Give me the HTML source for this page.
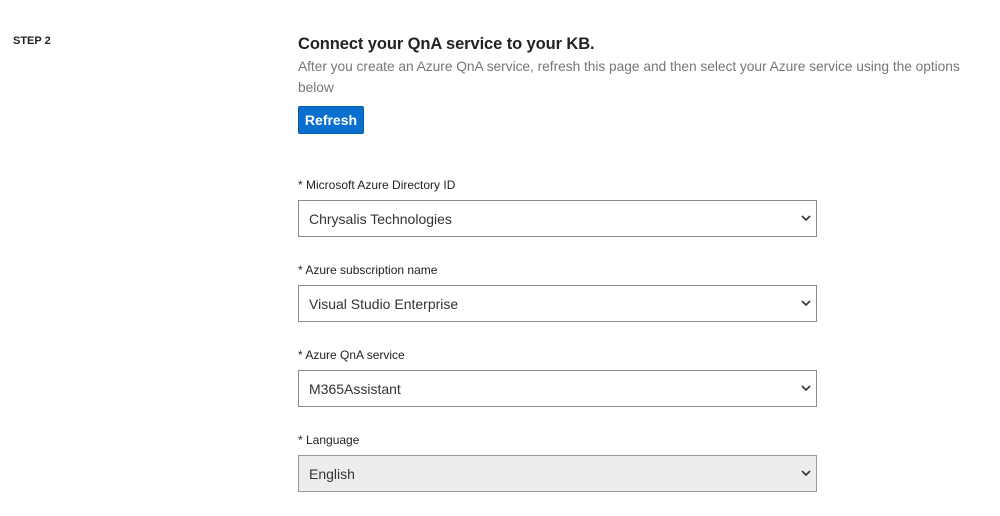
<!DOCTYPE html>
<html><head><style>
body{margin:0;background:#fff;font-family:"Liberation Sans",sans-serif;width:1000px;height:516px;overflow:hidden;position:relative}
.a{position:absolute}
.step{left:13px;top:35px;font-size:11px;font-weight:bold;color:#222}
.title{left:298px;top:35px;font-size:16.5px;font-weight:bold;color:#222;letter-spacing:-0.1px}
.sub{left:298px;top:56px;width:680px;font-size:13.8px;line-height:21px;color:#777;letter-spacing:-0.05px}
.btn{left:298px;top:106px;width:66px;height:28px;background:#0a6fcf;border:1px solid #0a5cab;box-sizing:border-box;border-radius:2px;color:#fff;font-weight:bold;font-size:14px;text-align:center;line-height:26px}
.lbl{left:298px;font-size:12px;color:#222}
.sel{left:298px;width:519px;height:37px;border:1px solid #8a8a8a;box-sizing:border-box;font-size:14px;color:#333;padding-left:10px;line-height:37px}
.sel svg{position:absolute;right:5px;top:14px}
</style></head><body>
<div class="a step">STEP 2</div>
<div class="a title">Connect your QnA service to your KB.</div>
<div class="a sub">After you create an Azure QnA service, refresh this page and then select your Azure service using the options below</div>
<div class="a btn">Refresh</div>

<div class="a lbl" style="top:178px">* Microsoft Azure Directory ID</div>
<div class="a sel" style="top:200px">Chrysalis Technologies<svg width="10" height="7" viewBox="0 0 10 7"><path d="M1 1l4 4 4-4" stroke="#333" stroke-width="1.6" fill="none"/></svg></div>

<div class="a lbl" style="top:263px">* Azure subscription name</div>
<div class="a sel" style="top:285px">Visual Studio Enterprise<svg width="10" height="7" viewBox="0 0 10 7"><path d="M1 1l4 4 4-4" stroke="#333" stroke-width="1.6" fill="none"/></svg></div>

<div class="a lbl" style="top:348px">* Azure QnA service</div>
<div class="a sel" style="top:370px">M365Assistant<svg width="10" height="7" viewBox="0 0 10 7"><path d="M1 1l4 4 4-4" stroke="#333" stroke-width="1.6" fill="none"/></svg></div>

<div class="a lbl" style="top:433px">* Language</div>
<div class="a sel" style="top:455px;background:#ededed;border-color:#999">English<svg width="10" height="7" viewBox="0 0 10 7"><path d="M1 1l4 4 4-4" stroke="#333" stroke-width="1.6" fill="none"/></svg></div>
</body></html>
